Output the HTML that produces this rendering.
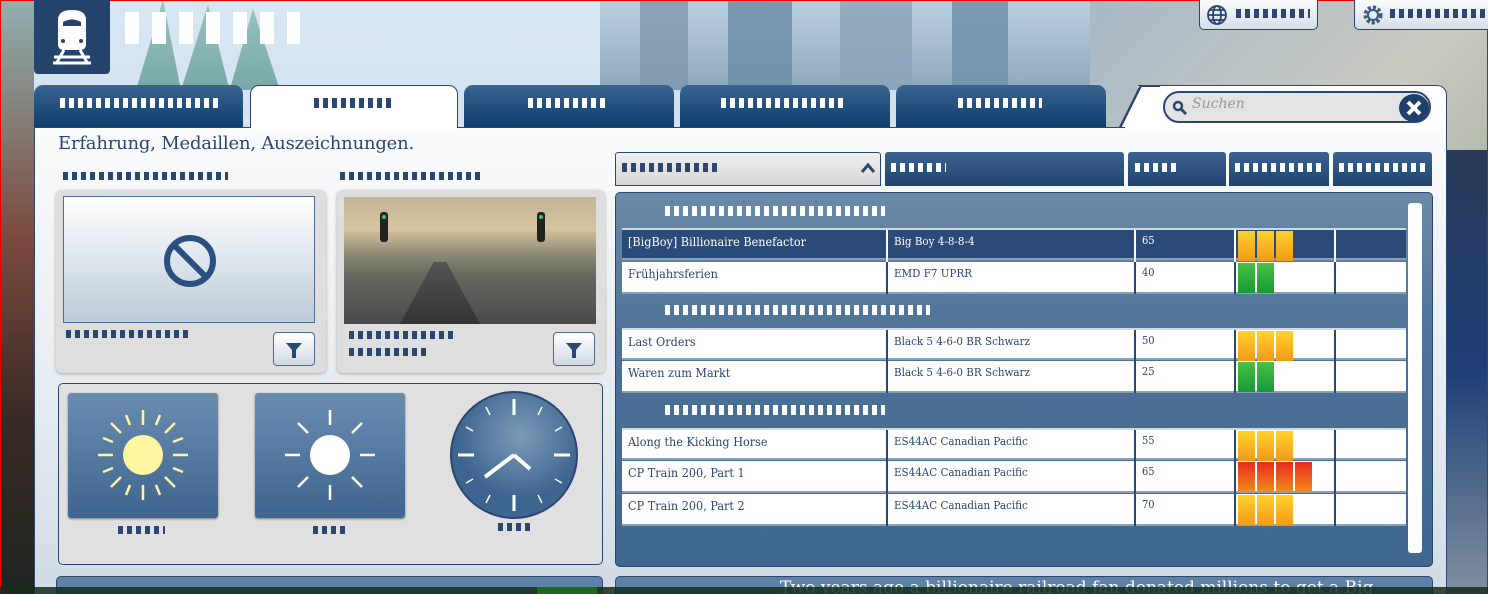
<!DOCTYPE html>
<html><head><meta charset="utf-8"><style>
*{margin:0;padding:0;box-sizing:border-box}
html,body{width:1488px;height:594px;overflow:hidden}
body{position:relative;font-family:"DejaVu Serif","Liberation Serif",serif;background:#cfe0ee}
.abs{position:absolute}
.b{position:absolute;height:8px;background:repeating-linear-gradient(90deg,#2b4670 0 5px,transparent 5px 9px)}
.bw{background:repeating-linear-gradient(90deg,#fff 0 5px,transparent 5px 9px)}
.tab{position:absolute;top:85px;height:42px;border-radius:9px 9px 0 0;background:linear-gradient(#3a6390,#103d6d)}
.hd{position:absolute;top:152px;height:34px;background:linear-gradient(#3b6290,#20446f);border-radius:3px 3px 0 0}
.row{position:absolute;left:622px;width:784px;height:32px;background:#fff;border-bottom:2px solid #8aa0b8;font-size:12.5px;color:#2b4670;font-family:"DejaVu Serif Condensed","DejaVu Serif",serif}
.row div{position:absolute;top:0;height:32px;border-left:2px solid #2b4670;padding:4px 6px}
.row .c1{left:0;border-left:none;width:264px}
.row .c2{left:264px;width:248px;font-size:11.5px}
.row .c3{left:512px;width:100px;font-size:11px}
.row .c4{left:612px;width:100px;padding:0}
.row .c5{left:712px;width:72px}
.sel{background:#2a4a78;color:#fff}
.sel div{border-color:#fff!important}
.sel .c1,.sel .c2,.sel .c3{color:#fff}
.bar{position:absolute;top:1px;width:17px;height:30px}
.y{background:linear-gradient(#ffd22a,#f29a1a)}
.g{background:linear-gradient(#4cbf47,#149a35)}
.r{background:linear-gradient(#e52b1e,#f28b18)}
</style></head><body>
<div class="abs" style="left:0;top:0;width:640px;height:594px;background:linear-gradient(#d7e6f2,#c3d8e8)"></div>
<div class="abs" style="left:100px;top:0;width:180px;height:90px;background:linear-gradient(#7fb6ac,#4f8f86);opacity:.7;clip-path:polygon(20% 100%,35% 0,45% 100%,60% 5%,72% 100%,85% 10%,100% 100%)"></div>
<div class="abs" style="left:0;top:0;width:34px;height:594px;background:linear-gradient(#8fb0b0,#7b4a3e 40%,#3a2a26 70%,#1d2420)"></div>
<div class="abs" style="left:600px;top:0;width:520px;height:90px;background:linear-gradient(#b9cfe0,#8ea9bf)"></div>
<div class="abs" style="left:640px;top:0;width:400px;height:90px;background:linear-gradient(90deg,#7d98ad 0 12%,transparent 12% 22%,#6c8aa3 22% 38%,transparent 38% 50%,#8aa3b8 50% 68%,transparent 68% 78%,#6f8ea8 78% 92%,transparent 92%);opacity:.8"></div>
<div class="abs" style="left:1090px;top:0;width:398px;height:594px;background:linear-gradient(135deg,#a7b9c8,#c9c9c0 40%,#9fae9a 70%,#3b4a58)"></div>
<div class="abs" style="left:1447px;top:150px;width:41px;height:444px;background:linear-gradient(#2a3a58,#1f3f78 50%,#8090a0)"></div>
<div class="abs" style="left:0;top:0;width:1488px;height:1px;background:#e00"></div>
<div class="abs" style="left:0;top:0;width:1px;height:594px;background:#e00"></div>
<div class="abs" style="right:0;top:0;width:1px;height:594px;background:#e00"></div>
<div class="abs" style="left:34px;top:0;width:76px;height:74px;background:#24446e;border-radius:0 0 4px 4px"></div>
<svg class="abs" style="left:50px;top:8px" width="44" height="58" viewBox="0 0 44 58"><path d="M8 12 Q8 2 22 2 Q36 2 36 12 V36 Q36 42 30 42 H14 Q8 42 8 36Z" fill="#fff"/><path d="M13 14 Q22 9 31 14 V18 H13Z" fill="#24446e"/><circle cx="13" cy="33" r="2" fill="#24446e"/><circle cx="31" cy="33" r="2" fill="#24446e"/><path d="M14 42 L6 56 M30 42 L38 56 M4 49 H40 M3 55 H41" stroke="#fff" stroke-width="3"/></svg>
<div class="abs" style="left:125px;top:12px;width:175px;height:32px;background:repeating-linear-gradient(90deg,#fff 0 14px,transparent 14px 27px)"></div>
<div class="abs" style="left:1199px;top:-4px;width:119px;height:34px;background:linear-gradient(#fff,#d4dde7);border:1.5px solid #2b4670;border-radius:5px"></div>
<svg class="abs" style="left:1206px;top:4px" width="22" height="22" viewBox="0 0 22 22"><g fill="none" stroke="#2b4670" stroke-width="1.8"><circle cx="11" cy="11" r="9"/><ellipse cx="11" cy="11" rx="4" ry="9"/><path d="M2 11H20M4 6H18M4 16H18"/></g></svg>
<div class="b" style="left:1236px;top:9px;width:74px;height:9px"></div>
<div class="abs" style="left:1354px;top:-4px;width:140px;height:34px;background:linear-gradient(#fff,#d4dde7);border:1.5px solid #2b4670;border-radius:5px"></div>
<svg class="abs" style="left:1362px;top:4px" width="22" height="22" viewBox="0 0 22 22"><circle cx="11" cy="11" r="7.5" fill="none" stroke="#3b5a80" stroke-width="4" stroke-dasharray="3 2"/><circle cx="11" cy="11" r="5" fill="none" stroke="#3b5a80" stroke-width="2"/></svg>
<div class="b" style="left:1390px;top:9px;width:95px;height:9px"></div>
<div class="tab" style="left:34px;width:209px"></div><div class="b bw" style="left:60px;top:98px;width:158px;height:10px;background:repeating-linear-gradient(90deg,#fff 0 5px,transparent 5px 9px)"></div>
<div class="tab" style="left:250px;width:208px;background:#fff;border:1.5px solid #2b4670;border-bottom:none;height:43px"></div><div class="b" style="left:314px;top:98px;width:80px;height:10px"></div>
<div class="tab" style="left:464px;width:210px"></div><div class="b bw" style="left:528px;top:98px;width:80px;height:10px"></div>
<div class="tab" style="left:680px;width:210px"></div><div class="b bw" style="left:721px;top:98px;width:122px;height:10px"></div>
<div class="tab" style="left:896px;width:210px"></div><div class="b bw" style="left:958px;top:98px;width:84px;height:10px"></div>
<div class="abs" style="left:1138px;top:85px;width:309px;height:44px;background:#fff;border:1.5px solid #2b4670;border-left:none;border-bottom:none;border-radius:0 10px 0 0"></div>
<div class="abs" style="left:1118px;top:85px;width:42px;height:44px;background:#2b4670;clip-path:polygon(0 100%,52% 0,100% 0,100% 100%)"></div>
<div class="abs" style="left:1121px;top:86.5px;width:40px;height:42px;background:#fff;clip-path:polygon(0 100%,52% 0,100% 0,100% 100%)"></div>
<div class="abs" style="left:1163px;top:91px;width:268px;height:32px;background:#e4e4e4;border:2px solid #2b4670;border-radius:16px"></div>
<svg class="abs" style="left:1172px;top:100px" width="16" height="16" viewBox="0 0 16 16"><circle cx="6" cy="6" r="4" fill="none" stroke="#2b4670" stroke-width="2.5"/><path d="M9 9 L14 14" stroke="#2b4670" stroke-width="3"/></svg>
<div class="abs" style="left:1192px;top:96px;font-style:italic;font-size:14px;color:#999">Suchen</div>
<div class="abs" style="left:1399px;top:94px;width:30px;height:28px;background:#1f3f6d;border-radius:50%"></div>
<svg class="abs" style="left:1405px;top:99px" width="18" height="18" viewBox="0 0 18 18"><path d="M3 3L15 15M15 3L3 15" stroke="#fff" stroke-width="4"/></svg>
<div class="abs" style="left:34px;top:127px;width:1413px;height:467px;background:linear-gradient(#fafbfc,#e4ebf1 60%,#d1dbe5);border-left:1.5px solid #2b4670;border-right:1.5px solid #2b4670;border-top:1.5px solid #2b4670"></div>
<div class="abs" style="left:251px;top:126px;width:206px;height:3px;background:#fff"></div>
<div class="abs" style="left:1125px;top:126px;width:321px;height:3px;background:#fff"></div>
<div class="abs" style="left:58px;top:133px;font-size:18px;color:#2b4670;letter-spacing:-0.2px">Erfahrung, Medaillen, Auszeichnungen.</div>
<div class="b" style="left:63px;top:172px;width:165px"></div>
<div class="b" style="left:340px;top:172px;width:140px"></div>
<div class="abs" style="left:56px;top:190px;width:270px;height:183px;background:#dedede;border-radius:6px;box-shadow:0 1px 3px #aaa"></div>
<div class="abs" style="left:63px;top:196px;width:252px;height:127px;background:linear-gradient(#fff,#bccbd9);border:1px solid #4d6e92"></div>
<svg class="abs" style="left:162px;top:233px" width="56" height="56" viewBox="0 0 56 56"><circle cx="28" cy="28" r="23" fill="none" stroke="#2b4f7e" stroke-width="6"/><path d="M13 13L43 43" stroke="#2b4f7e" stroke-width="6"/></svg>
<div class="b" style="left:66px;top:330px;width:126px"></div>
<div class="abs" style="left:273px;top:332px;width:42px;height:34px;background:linear-gradient(#fff,#cfd9e4);border:1.5px solid #4d6e92;border-radius:4px"></div>
<svg class="abs" style="left:284px;top:341px" width="20" height="18" viewBox="0 0 20 18"><path d="M2 2H18L12 9V17H8V9Z" fill="#2b4670"/></svg>
<div class="abs" style="left:337px;top:190px;width:268px;height:183px;background:#dedede;border-radius:6px;box-shadow:0 1px 3px #aaa"></div>
<div class="abs" style="left:344px;top:197px;width:252px;height:127px;background:linear-gradient(#c4b498,#d6c49e 25%,#8c8a76 45%,#6a6a62 60%,#48484a)"></div>
<div class="abs" style="left:400px;top:262px;width:80px;height:62px;background:linear-gradient(#555,#333);clip-path:polygon(42% 0,58% 0,100% 100%,0 100%)"></div>
<div class="abs" style="left:380px;top:212px;width:8px;height:30px;background:#222;border-radius:3px"></div>
<div class="abs" style="left:537px;top:212px;width:8px;height:30px;background:#222;border-radius:3px"></div>
<div class="abs" style="left:382px;top:215px;width:4px;height:4px;background:#3c6;border-radius:50%"></div>
<div class="abs" style="left:539px;top:215px;width:4px;height:4px;background:#3c6;border-radius:50%"></div>
<div class="b" style="left:349px;top:331px;width:106px"></div>
<div class="b" style="left:349px;top:348px;width:80px"></div>
<div class="abs" style="left:553px;top:332px;width:42px;height:34px;background:linear-gradient(#fff,#cfd9e4);border:1.5px solid #4d6e92;border-radius:4px"></div>
<svg class="abs" style="left:564px;top:341px" width="20" height="18" viewBox="0 0 20 18"><path d="M2 2H18L12 9V17H8V9Z" fill="#2b4670"/></svg>
<div class="abs" style="left:58px;top:383px;width:545px;height:182px;background:#e0e0e0;border:1.5px solid #2b4670;border-radius:5px"></div>
<div class="abs" style="left:68px;top:393px;width:150px;height:125px;background:linear-gradient(#6a8db0,#3e6590);border-radius:3px;box-shadow:0 1px 2px #777"></div>
<svg class="abs" style="left:93px;top:405px" width="100" height="100" viewBox="0 0 100 100"><ellipse cx="50" cy="50" rx="20" ry="20" fill="#fdf5a0"/><g stroke="#fdf5a0" stroke-width="2.5"><path d="M50 5V20M50 80V95M5 50H20M80 50H95M18 18L28 28M72 72L82 82M82 18L72 28M18 82L28 72"/><path d="M33 10L37 20M67 10L63 20M33 90L37 80M67 90L63 80M10 33L20 37M10 67L20 63M90 33L80 37M90 67L80 63"/></g></svg>
<div class="b" style="left:118px;top:526px;width:47px"></div>
<div class="abs" style="left:255px;top:393px;width:150px;height:125px;background:linear-gradient(#6a8db0,#3e6590);border-radius:3px;box-shadow:0 1px 2px #777"></div>
<svg class="abs" style="left:280px;top:405px" width="100" height="100" viewBox="0 0 100 100"><circle cx="50" cy="50" r="20" fill="#fff"/><g stroke="#fff" stroke-width="2.5"><path d="M50 5V20M50 80V95M5 50H20M80 50H95M18 18L28 28M72 72L82 82M82 18L72 28M18 82L28 72"/></g></svg>
<div class="b" style="left:313px;top:526px;width:33px"></div>
<svg class="abs" style="left:449px;top:391px" width="130" height="130" viewBox="0 0 130 130"><defs><radialGradient id="cg" cx="55%" cy="35%"><stop offset="0" stop-color="#7b9bb8"/><stop offset="1" stop-color="#3e6590"/></radialGradient></defs><circle cx="65" cy="64" r="63" fill="url(#cg)" stroke="#2b4670" stroke-width="2"/><g stroke="#fff" stroke-width="3"><path d="M65 8V24M65 104V120M9 64H25M105 64H121"/></g><g stroke="#fff" stroke-width="1.5"><path d="M93 16L89 24M113 36L106 40M113 92L106 88M93 112L89 104M37 112L41 104M17 92L24 88M17 36L24 40M37 16L41 24"/></g><path d="M65 64L36 86M65 64L81 78" stroke="#fff" stroke-width="4"/></svg>
<div class="b" style="left:498px;top:523px;width:34px"></div>
<div class="hd" style="left:615px;width:266px;background:linear-gradient(#f0f0f0,#d6d6d6);border:1.5px solid #2b4670"></div>
<div class="b" style="left:622px;top:163px;width:97px;height:9px"></div>
<svg class="abs" style="left:860px;top:162px" width="16" height="12" viewBox="0 0 16 12"><path d="M2 10L8 3L14 10" fill="none" stroke="#2b4670" stroke-width="3"/></svg>
<div class="hd" style="left:885px;width:239px"></div><div class="b bw" style="left:891px;top:163px;width:55px;height:9px"></div>
<div class="hd" style="left:1128px;width:98px"></div><div class="b bw" style="left:1135px;top:163px;width:41px;height:9px"></div>
<div class="hd" style="left:1229px;width:100px"></div><div class="b bw" style="left:1235px;top:163px;width:90px;height:9px"></div>
<div class="hd" style="left:1333px;width:99px"></div><div class="b bw" style="left:1339px;top:163px;width:90px;height:9px"></div>
<div class="abs" style="left:615px;top:192px;width:818px;height:375px;background:linear-gradient(#6a8aa8,#4d7297 40%,#3f6790);border:1.5px solid #2b4670;border-radius:5px"></div>
<div class="abs" style="left:1408px;top:203px;width:14px;height:350px;background:#fff;border-radius:3px"></div>
<div class="b bw" style="left:665px;top:206px;width:220px;height:10px"></div>
<div class="row sel" style="top:228px;border-top:2px solid #d0d8e2"><div class="c1">[BigBoy] Billionaire Benefactor</div><div class="c2">Big Boy 4-8-8-4</div><div class="c3">65</div><div class="c4"><span class="bar y" style="left:2px"></span><span class="bar y" style="left:21px"></span><span class="bar y" style="left:40px"></span></div><div class="c5"></div></div>
<div class="row" style="top:262px"><div class="c1">Frühjahrsferien</div><div class="c2">EMD F7 UPRR</div><div class="c3">40</div><div class="c4"><span class="bar g" style="left:2px"></span><span class="bar g" style="left:21px"></span></div><div class="c5"></div></div>
<div class="b bw" style="left:665px;top:305px;width:265px;height:10px"></div>
<div class="row" style="top:328px;border-top:2px solid #d0d8e2"><div class="c1">Last Orders</div><div class="c2">Black 5 4-6-0 BR Schwarz</div><div class="c3">50</div><div class="c4"><span class="bar y" style="left:2px"></span><span class="bar y" style="left:21px"></span><span class="bar y" style="left:40px"></span></div><div class="c5"></div></div>
<div class="row" style="top:361px"><div class="c1">Waren zum Markt</div><div class="c2">Black 5 4-6-0 BR Schwarz</div><div class="c3">25</div><div class="c4"><span class="bar g" style="left:2px"></span><span class="bar g" style="left:21px"></span></div><div class="c5"></div></div>
<div class="b bw" style="left:665px;top:405px;width:220px;height:10px"></div>
<div class="row" style="top:428px;border-top:2px solid #d0d8e2"><div class="c1">Along the Kicking Horse</div><div class="c2">ES44AC Canadian Pacific</div><div class="c3">55</div><div class="c4"><span class="bar y" style="left:2px"></span><span class="bar y" style="left:21px"></span><span class="bar y" style="left:40px"></span></div><div class="c5"></div></div>
<div class="row" style="top:461px"><div class="c1">CP Train 200, Part 1</div><div class="c2">ES44AC Canadian Pacific</div><div class="c3">65</div><div class="c4"><span class="bar r" style="left:2px"></span><span class="bar r" style="left:21px"></span><span class="bar r" style="left:40px"></span><span class="bar r" style="left:59px"></span></div><div class="c5"></div></div>
<div class="row" style="top:494px"><div class="c1">CP Train 200, Part 2</div><div class="c2">ES44AC Canadian Pacific</div><div class="c3">70</div><div class="c4"><span class="bar y" style="left:2px"></span><span class="bar y" style="left:21px"></span><span class="bar y" style="left:40px"></span></div><div class="c5"></div></div>
<div class="abs" style="left:56px;top:576px;width:547px;height:18px;background:#5d82a6;border:1.5px solid #2b4670;border-bottom:none;border-radius:5px 5px 0 0"></div>
<div class="abs" style="left:615px;top:576px;width:818px;height:18px;background:#5d82a6;border:1.5px solid #2b4670;border-bottom:none;border-radius:5px 5px 0 0;overflow:hidden"><div style="position:absolute;left:164px;top:1px;font-size:17px;color:#fff;white-space:nowrap">Two years ago a billionaire railroad fan donated millions to get a Big</div></div>
<div class="abs" style="left:0;top:587px;width:1488px;height:7px;background:rgba(20,45,25,.85)"></div>
<div class="abs" style="left:537px;top:587px;width:60px;height:7px;background:#1c6a20"></div>
</body></html>
